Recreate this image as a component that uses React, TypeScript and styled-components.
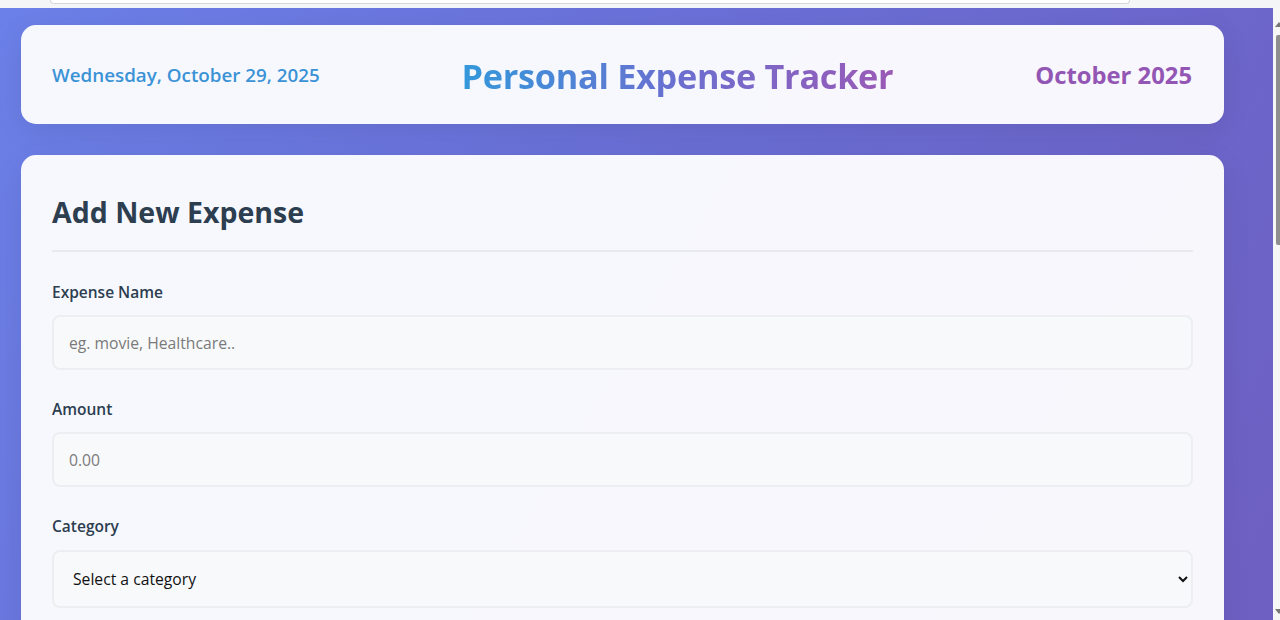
import React from "react";
import styled, { createGlobalStyle } from "styled-components";

const Global = createGlobalStyle`
  * { box-sizing: border-box; }
  html, body { margin: 0; padding: 0; height: 620px; overflow: hidden; }
  body { font-family: "Open Sans", "Noto Sans", sans-serif; background: #f3f4f5; }
`;

const Page = styled.div`
  display: flex;
  flex-direction: column;
  height: 620px;
  width: 1280px;
`;

const TopStrip = styled.div`
  height: 8px;
  background: #f4f5f6;
  padding-left: 50px;
`;

const TopField = styled.div`
  width: 1080px;
  height: 4px;
  background: #ffffff;
  border: 1px solid #d6d8da;
  border-top: none;
  border-radius: 0 0 14px 14px;
`;

const Body = styled.div`
  display: flex;
  flex: 1;
  min-height: 0;
`;

const Main = styled.main`
  width: 1273px;
  background: linear-gradient(120deg, #6b80e8 0%, #6a6fd6 45%, #6e5fc2 100%);
  padding: 17px 49px 0 21px;
  display: flex;
  flex-direction: column;
  gap: 31px;
  overflow: hidden;
`;

const Scrollbar = styled.div`
  width: 7px;
  background: #f6f6f6;
  position: relative;
`;

const Thumb = styled.div`
  position: absolute;
  left: 3px;
  top: 27px;
  width: 4px;
  height: 210px;
  background: #8e8e8e;
  border-radius: 2px 0 0 2px;
`;

const Arrow = styled.div<{ $down?: boolean }>`
  position: absolute;
  left: 2px;
  ${(p) => (p.$down ? "bottom: 6px;" : "top: 14px;")}
  width: 0;
  height: 0;
  border-left: 4px solid transparent;
  border-right: 4px solid transparent;
  ${(p) => (p.$down ? "border-top: 5px solid #777;" : "border-bottom: 5px solid #777;")}
`;

const Card = styled.section`
  background: rgba(255, 255, 255, 0.95);
  border-radius: 15px;
  box-shadow: 0 8px 30px rgba(0, 0, 0, 0.08);
  flex-shrink: 0;
`;

const HeaderCard = styled(Card)`
  height: 99px;
  padding: 0 32px 0 31px;
  display: flex;
  align-items: center;
  justify-content: space-between;
`;

const DateText = styled.div`
  color: #3b93d6;
  font-size: 18.8px;
  font-weight: 600;
`;

const Title = styled.h1`
  margin: 2px 0 0 0;
  font-size: 34.3px;
  font-weight: 700;
  letter-spacing: -0.3px;
  background: linear-gradient(90deg, #3498db 0%, #6a6fd0 50%, #9b59b6 100%);
  -webkit-background-clip: text;
  background-clip: text;
  color: transparent;
`;

const MonthText = styled.div`
  color: #9356b4;
  font-size: 23.8px;
  font-weight: 700;
  text-align: right;
`;

const FormCard = styled(Card)`
  padding: 40px 31px 30px 31px;
  flex: 1;
  border-radius: 15px 15px 0 0;
`;

const FormTitle = styled.h2`
  margin: 0 0 30px 0;
  padding-bottom: 21px;
  border-bottom: 2px solid #e8eaef;
  font-size: 28.5px;
  font-weight: 700;
  color: #2c3e50;
  line-height: 1.2;
`;

const Group = styled.div`
  display: flex;
  flex-direction: column;
  margin-bottom: 29px;
`;

const Label = styled.label`
  font-size: 15.5px;
  font-weight: 600;
  color: #2c3e50;
  line-height: 20px;
  margin-bottom: 13px;
`;

const Input = styled.input`
  height: 55px;
  padding: 0 15px;
  border: 2px solid #eceef1;
  border-radius: 8px;
  background: #f8f9fb;
  font-family: "Open Sans", "Noto Sans", sans-serif;
  font-size: 15.7px;
  color: #333;
  outline: none;
  &::placeholder { color: #7a7a7a; }
`;

const Select = styled.select`
  height: 58px;
  margin-top: 1px;
  padding: 0 12px 0 15px;
  border: 2px solid #eceef1;
  border-radius: 8px;
  background: #f8f9fb;
  font-family: "Open Sans", "Noto Sans", sans-serif;
  font-size: 15.7px;
  color: #111;
  outline: none;
`;

export default function App() {
  return (
    <>
      <Global />
      <Page>
        <TopStrip>
          <TopField />
        </TopStrip>
        <Body>
          <Main>
            <HeaderCard>
              <DateText>Wednesday, October 29, 2025</DateText>
              <Title>Personal Expense Tracker</Title>
              <MonthText>October 2025</MonthText>
            </HeaderCard>
            <FormCard>
              <FormTitle>Add New Expense</FormTitle>
              <Group>
                <Label htmlFor="name">Expense Name</Label>
                <Input id="name" placeholder="eg. movie, Healthcare.." />
              </Group>
              <Group>
                <Label htmlFor="amount">Amount</Label>
                <Input id="amount" placeholder="0.00" />
              </Group>
              <Group>
                <Label htmlFor="category">Category</Label>
                <Select id="category" defaultValue="">
                  <option value="">Select a category</option>
                  <option value="food">Food</option>
                  <option value="transport">Transport</option>
                  <option value="entertainment">Entertainment</option>
                  <option value="healthcare">Healthcare</option>
                </Select>
              </Group>
            </FormCard>
          </Main>
          <Scrollbar>
            <Arrow />
            <Thumb />
            <Arrow $down />
          </Scrollbar>
        </Body>
      </Page>
    </>
  );
}
